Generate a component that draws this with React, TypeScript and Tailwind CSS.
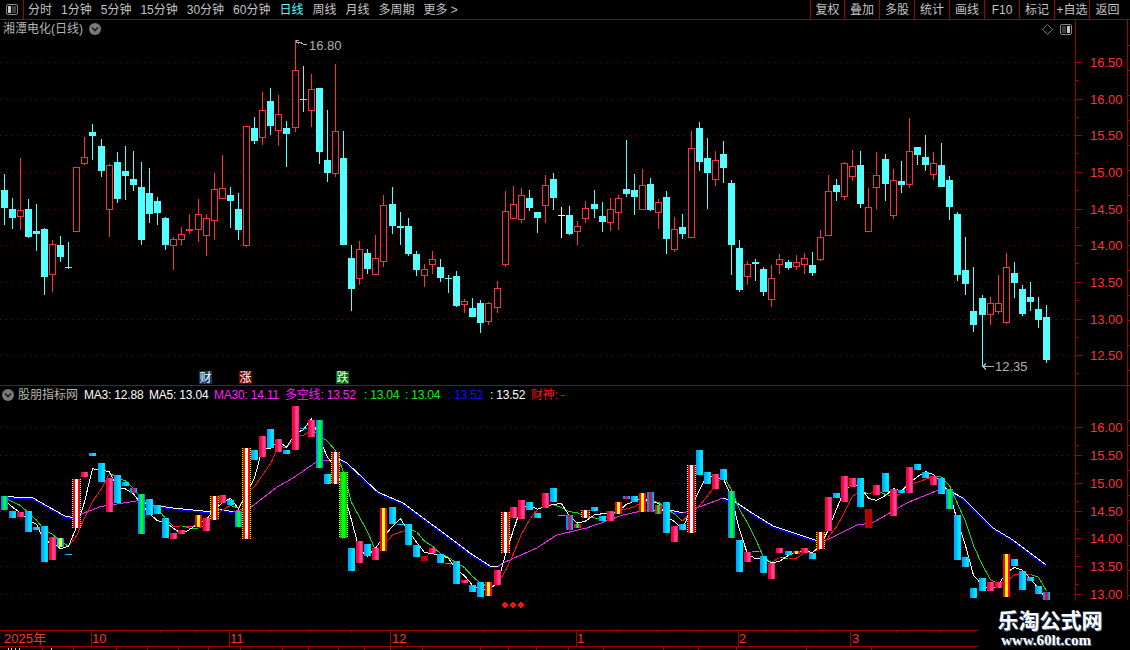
import React from "react";

type C = [number, number, number, number, number];
const D: C[] = [
[0,174,225,190,208],[0,198,229,209,218],[1,158,230,210,217],[0,199,238,209,237],[0,204,251,231,234],[0,228,295,229,277],[1,240,292,244,275],[0,236,262,245,257],[0,242,269,267,268],[1,167,232,167,232],
[1,137,165,157,164],[0,124,160,132,136],[0,139,177,146,171],[1,164,237,165,210],[0,152,203,162,199],[0,146,200,171,176],[0,151,191,179,185],[0,162,245,187,240],[0,168,223,193,214],[0,197,225,201,213],
[0,217,250,218,245],[1,237,270,239,246],[1,227,245,234,240],[1,214,234,229,231],[1,199,242,214,230],[1,214,256,218,236],[1,173,240,189,221],[1,155,199,188,199],[0,187,228,195,201],[0,193,240,209,230],
[1,126,247,126,246],[0,117,144,128,141],[1,92,145,110,138],[0,88,135,101,126],[1,95,146,114,131],[0,121,167,128,134],[1,40,132,70,128],[0,66,112,99,100],[1,74,127,89,111],[0,88,164,88,152],
[0,110,182,160,173],[1,64,177,131,174],[0,131,245,158,245],[0,245,311,258,289],[1,241,285,249,279],[0,249,274,253,269],[1,235,275,258,275],[1,195,267,205,262],[0,187,234,204,226],[0,212,245,226,228],
[0,218,256,226,254],[0,251,276,254,270],[1,264,287,269,276],[1,251,274,259,265],[0,259,282,267,278],[0,275,293,278,279],[0,271,307,276,306],[1,299,313,301,305],[0,298,317,308,317],[0,300,333,303,323],
[1,302,325,303,322],[1,281,313,288,308],[1,191,267,211,265],[1,186,219,204,219],[1,188,223,195,220],[0,190,211,198,208],[0,212,233,212,218],[1,175,223,185,206],[0,173,210,179,198],[2,207,238,215,216],
[0,206,235,215,234],[1,221,245,226,232],[1,201,223,208,219],[0,190,218,204,209],[0,202,232,216,222],[1,198,231,209,223],[1,195,230,198,213],[0,140,197,189,194],[0,174,215,190,197],[1,169,210,185,210],
[0,178,211,184,210],[1,199,229,202,213],[0,191,254,197,239],[1,217,252,229,250],[0,214,239,227,234],[1,131,238,148,238],[0,122,171,128,162],[0,138,209,158,173],[1,151,186,160,180],[0,141,183,154,168],
[0,180,275,183,245],[0,240,292,248,290],[1,261,285,264,277],[0,259,281,262,264],[0,267,296,269,292],[1,265,307,278,300],[1,254,274,259,265],[0,260,270,262,268],[1,255,270,262,267],[1,253,274,258,265],
[0,252,276,265,273],[1,230,261,237,260],[1,175,236,191,236],[0,179,201,185,192],[1,162,200,163,197],[1,150,181,166,177],[0,151,208,165,204],[1,188,232,207,232],[1,152,209,175,188],[0,154,201,159,184],
[1,169,219,180,216],[0,161,193,181,185],[1,118,188,151,185],[0,147,165,147,155],[0,135,171,157,165],[1,152,180,163,175],[0,143,187,165,187],[0,176,220,180,207],[0,212,281,214,275],[0,237,295,270,284],
[0,267,332,311,325],[0,295,367,298,315],[1,297,325,303,315],[1,275,314,303,312],[1,253,324,267,323],[0,262,298,273,283],[0,285,316,289,314],[0,282,311,297,302],[0,297,328,309,320],[0,305,363,317,360],
];
const LT = "g c p c c c p k c w p c c p c c m g c c c p p p y p w p c g w c p c p c p c p g c w G c p c p y c c c c d p c c c p c c y p w p p c c p c c m r w c c p y m c y m r c p c w c c p c g c p c c p p c y p c w p c p p c d p c p c p c c p c g c c c c p p y c c c c m".split(" ");

const CY = ["#00a0ff","#00aeff","#00bcff","#00ccff","#00e0ff","#00e8ff","#00d8ff"];
const PK = ["#ff0030","#ff0030","#ff1060","#ff3080","#ff4898","#ff4090","#ff2070"];
const PAL: Record<string, string[]> = {
  c: CY,
  p: PK,
  g: ["#0090ff","#00a0ff","#00f040","#00ff20","#00ff20","#00c880","#0090ff"],
  G: ["#00c000","#00e000","#00ff20","#00ff20","#00ff20","#00e000","#00c000"],
  k: ["#00c8ff","#00e0ff","#ffff00","#ffff00","#ffff00","#00c0ff","#0090ff"],
  y: ["#ff0020","#ff0020","#ffff00","#ffff00","#ffff00","#ff0020","#ff0020"],
  w: ["#ff0000","#ff0000","#ffffff","#ffffff","#ffffff","#ff0000","#ff0000"],
  m: ["#0090ff","#0090ff","#e01030","#e01030","#c02050","#0090ff","#00c0ff"],
  r: ["#ff0030","#ff0030","#00e030","#00ff20","#00e030","#ff0030","#ff0030"],
  d: ["#c00000","#c00000","#b00000","#b00000","#b00000","#c00000","#c00000"],
};

const cx = (i: number) => 4 + 8 * i + Math.floor((i - (i >= 60 ? 1 : 0)) / 12);
const low = (y: number) => 400.3 + (y - 62.3) * 0.7529;
const CYAN = "#54ffff";
const RED = "#ff3232";
const GRID = "#a00000";
const closes = D.map((d) => low(d[0] === 1 ? d[3] : d[4]));
const ma = (n: number) =>
  closes.map((_, i) => {
    let s = 0;
    for (let k = 0; k < n; k++) s += i - k >= 0 ? closes[i - k] : 494;
    return s / n;
  });
const MA3 = ma(3);
const MA5 = ma(5);
const MA30: [number, number][] = [
[4,496.5],[33,498],[66,516.7],[76,517.5],[84,513],[100,506.7],[116.7,504],[138,500.7],[140,503],[173,508],[213,512],[220,509],[233,512],[251.7,506.7],[276.7,487.3],[293,478],[316.7,461.7],[339.3,459.3],[347,463],[376.7,491],[380,493],[403,503],[436.7,528],[470,553],[490,566],[498,566.3],[503,563],[536.7,548],[556.7,535],[586.7,528],[623,515],[646.7,510],[670,510],[683,513],[696.7,508],[723,498],[735,501.7],[750,511.7],[773,526],[816.7,540.7],[826.7,540],[856.7,525],[873,522.7],[906.7,503],[936.7,490.7],[946.7,489.3],[963,498],[993,528],[1013,540],[1046,565],
];
const mainGrid = [62, 99, 135, 172, 209, 245, 282, 319, 355];
const mainLab = ["16.50","16.00","15.50","15.00","14.50","14.00","13.50","13.00","12.50"];
const lowGrid = [427, 455, 483, 511, 538, 566, 594];
const lowLab = ["16.00","15.50","15.00","14.50","14.00","13.50","13.00"];

function Axis({ grid, labels, end }: { grid: number[]; labels: string[]; end: number }) {
  return (
    <g>
      {grid.map((y, i) => (
        <g key={y}>
          <line x1={0} x2={1075} y1={y + 0.5} y2={y + 0.5} stroke="#8c0000" strokeDasharray="1 5" />
          <rect x={1076} y={y} width={6} height={1} fill={GRID} />
          <rect x={1076} y={y + 18} width={3} height={1} fill={GRID} />
          <text x={1090} y={y + 5} fontSize={13} fill={RED}>{labels[i]}</text>
        </g>
      ))}
      <rect x={1127} y={20} width={1} height={end - 20} fill={GRID} />
      {Array.from({ length: 24 }, (_, k) => 45 + k * 25).filter((y) => y < end).map((y) => (
        <rect key={y} x={1127} y={y} width={3} height={1} fill={GRID} />
      ))}
    </g>
  );
}

function Candles() {
  return (
    <g>
      {D.map(([t, wt, wb, bt, bb], i) => {
        const c = cx(i);
        const color = t === 0 ? CYAN : t === 1 ? RED : "#ffffff";
        const h = bb - bt;
        return (
          <g key={i}>
            <rect x={c} y={wt} width={1} height={wb - wt} fill={color} />
            {t === 1 && h > 3 ? (
              <rect x={c - 2.5} y={bt + 0.5} width={6} height={h - 1} fill="#000" stroke={color} />
            ) : (
              <rect x={c - 3} y={bt} width={7} height={Math.max(h, 1)} fill={color} />
            )}
          </g>
        );
      })}
    </g>
  );
}

function Segs() {
  return (
    <g fill="none">
      {MA30.slice(1).map((p, i) => {
        const q = MA30[i];
        const up = p[1] < q[1];
        return up ? (
          <line key={i} x1={q[0]} y1={q[1]} x2={p[0]} y2={p[1]} stroke="#ff20ff" />
        ) : (
          <g key={i}>
            <line x1={q[0]} y1={q[1] + 1} x2={p[0]} y2={p[1] + 1} stroke="#0000ff" strokeWidth={2} />
            <line x1={q[0]} y1={q[1]} x2={p[0]} y2={p[1]} stroke="#ffffff" />
          </g>
        );
      })}
      {MA5.slice(1).map((y, i) => (
        <line key={i} x1={cx(i) + 0.5} y1={MA5[i]} x2={cx(i + 1) + 0.5} y2={y} stroke={y < MA5[i] ? "#ff1010" : "#10e010"} />
      ))}
      <polyline points={MA3.map((y, i) => `${cx(i) + 0.5},${y}`).join(" ")} stroke="#ffffff" />
    </g>
  );
}

function Bars() {
  return (
    <g>
      {D.map((d, i) => {
        const c = cx(i);
        const t = LT[i];
        const top = Math.round(low(d[3]));
        const bot = Math.min(600, Math.round(low(d[4])));
        const h = Math.max(bot - top, 1);
        const pal = PAL[t];
        return (
          <g key={i}>
            {pal.map((col, k) => (
              <rect key={k} x={c - 3 + k} y={top} width={1} height={h} fill={col} />
            ))}
            {(t === "w" || t === "G") && (
              <g>
                <line x1={c - 3.5} x2={c - 3.5} y1={top} y2={bot} stroke="#ffff00" strokeDasharray="1 1" />
                <line x1={c + 4.5} x2={c + 4.5} y1={top} y2={bot} stroke="#ffff00" strokeDasharray="1 1" />
              </g>
            )}
          </g>
        );
      })}
    </g>
  );
}

const tabs = ["分时", "1分钟", "5分钟", "15分钟", "30分钟", "60分钟", "日线", "周线", "月线", "多周期", "更多 >"];
const btns = ["复权", "叠加", "多股", "统计", "画线", "F10", "标记", "+自选"];
const legend: [string, string, number][] = [
  ["MA3: 12.88", "text-white", 65],
  ["MA5: 13.04", "text-white", 65],
  ["MA30: 14.11", "text-[#ff20ff]", 71],
  ["多空线: 13.52", "text-[#ff20ff]", 79],
  [": 13.04", "text-[#10f010]", 41],
  [": 13.04", "text-[#10f010]", 43],
  [": 13.52", "text-[#1010ff]", 42],
  [": 13.52", "text-white", 41],
  ["财神: -", "text-[#ff1010]", 40],
];
const majorTicks = [91, 229, 390, 576, 738, 850];
const minorTicks = [160, 195, 270, 310, 351, 437, 484, 530, 617, 657, 698, 766, 796, 822, 896, 940];
const lowerTicks = [42, 73, 116, 147, 178, 208, 240, 282, 308, 338, 364, 390, 422, 480, 508, 536, 568, 603, 663, 698, 736, 806, 871];
const months: [string, number][] = [["10", 92], ["11", 230], ["12", 392], ["1", 577], ["2", 739], ["3", 852]];

function Chevron({ size }: { size: number }) {
  return (
    <svg width={size} height={size} viewBox="0 0 12 12" className="shrink-0">
      <circle cx={6} cy={6} r={6} fill="#7a7a7a" />
      <path d="M3 4.5 L6 7.5 L9 4.5" fill="none" stroke="#1a1a1a" strokeWidth={1.6} />
    </svg>
  );
}

export default function App() {
  return (
    <div className="relative w-[1130px] h-[650px] overflow-hidden bg-black text-[12px] leading-none font-['Liberation_Sans','Noto_Sans_CJK_SC',sans-serif]">
      <div className="flex h-5 items-stretch border-b border-[#a00000] text-[#c4c4c4]">
        <div className="flex w-6 items-center justify-center border-r border-[#a00000]">
          <svg width={12} height={11} viewBox="0 0 12 11">
            <rect x={0.5} y={0.5} width={11} height={10} rx={1.5} fill="none" stroke="#8a8a8a" />
            <rect x={2} y={2} width={3} height={7} fill="#c8c8c8" />
            <rect x={6} y={2} width={4} height={7} fill="#3c3c3c" />
          </svg>
        </div>
        <div className="flex items-center gap-[9px] pl-1">
          {tabs.map((t) => (
            <span key={t} className={t === "日线" ? "text-[#54ffff]" : ""}>{t}</span>
          ))}
        </div>
        <div className="ml-auto flex">
          {btns.map((b, i) => (
            <span key={b} className={`flex items-center justify-center border-l border-[#a00000] ${i === 0 ? "w-[34px]" : "w-[35px]"}`}>{b}</span>
          ))}
          <span className="flex w-[41px] items-center justify-center border-l border-[#a00000] pr-[5px]">返回</span>
        </div>
      </div>

      <div className="relative h-[365px]">
        <div className="absolute left-[3px] top-[3px] flex items-center gap-[6px] text-[#b4b4b4]">
          <span>湘潭电化(日线)</span>
          <Chevron size={12} />
        </div>
        <div className="absolute left-[1042px] top-[4px] flex items-center gap-[7px]">
          <svg width={11} height={11} viewBox="0 0 11 11">
            <path d="M5.5 0.5 L10.5 5.5 L5.5 10.5 L0.5 5.5 Z" fill="none" stroke="#7a7a7a" />
          </svg>
          <svg width={12} height={11} viewBox="0 0 12 11">
            <rect x={0.5} y={0.5} width={11} height={10} rx={1.5} fill="none" stroke="#8a8a8a" />
            <rect x={2} y={2} width={4} height={7} fill="#3c3c3c" />
            <rect x={7} y={2} width={3} height={7} fill="#c8c8c8" />
          </svg>
        </div>
        <svg width={1130} height={365} viewBox="0 20 1130 365" shapeRendering="crispEdges" className="block">
          <Axis grid={mainGrid} labels={mainLab} end={385} />
          <rect x={1075} y={20} width={1} height={365} fill={GRID} />
          <Candles />
          <g fill="none" stroke="#b0b0b0">
            <path d="M296 41 L299 40 M296 41 L299 44 M296 42 L300 42 L303 44 L307 45" />
            <path d="M983 366.5 L994 366.5 M983 366.5 L986 363.5 M983 366.5 L986 369.5" />
          </g>
          <text x={309} y={50} fontSize={13} fill="#b0b0b0">16.80</text>
          <text x={995} y={371} fontSize={13} fill="#b0b0b0">12.35</text>
          <rect x={199} y={371} width={13} height={13} fill="#0f3c70" />
          <rect x={239} y={371} width={13} height={13} fill="#7a0000" />
          <rect x={336} y={371} width={13} height={13} fill="#006a00" />
          <text x={199.5} y={382} fontSize={12} fill="#fff">财</text>
          <text x={239.5} y={382} fontSize={12} fill="#fff">涨</text>
          <text x={336.5} y={382} fontSize={12} fill="#fff">跌</text>
        </svg>
      </div>

      <div className="flex h-[19px] border-t border-[#a00000] tracking-[-0.2px]">
        <div className="flex w-[1076px] items-center border-r border-[#a00000] pl-[2px]">
          <Chevron size={12} />
          <span className="ml-[4px] w-[66px] tracking-normal text-[#b4b4b4]">股朋指标网</span>
          {legend.map(([t, c, w], i) => (
            <span key={i} className={`whitespace-nowrap ${c}`} style={{ width: w }}>{t}</span>
          ))}
        </div>
        <div className="w-[52px] border-r border-[#a00000]" />
      </div>

      <svg width={1130} height={226} viewBox="0 404 1130 226" shapeRendering="crispEdges" className="block">
        <Axis grid={lowGrid} labels={lowLab} end={600} />
        <rect x={1075} y={404} width={1} height={196} fill={GRID} />
        <Segs />
        <Bars />
        {[505, 513, 521].map((x) => (
          <circle key={x} cx={x} cy={605} r={2.8} fill="#ff1010" />
        ))}
      </svg>

      <svg width={1130} height={20} viewBox="0 630 1130 20" shapeRendering="crispEdges" className="block">
        <rect x={0} y={630} width={1130} height={1} fill={GRID} />
        <rect x={0} y={646} width={1130} height={1} fill={GRID} />
        {majorTicks.map((x) => <rect key={x} x={x} y={630} width={1} height={16} fill={GRID} />)}
        {minorTicks.map((x) => <rect key={x} x={x} y={630} width={1} height={3} fill={GRID} />)}
        {lowerTicks.map((x) => <rect key={x} x={x} y={646} width={1} height={4} fill={GRID} />)}
        <text x={4} y={643} fontSize={13} fill={RED}>2025年</text>
        {months.map(([m, x]) => <text key={x} x={x} y={643} fontSize={13} fill={RED}>{m}</text>)}
        {[8, 11, 15, 19, 51].map((x) => <rect key={x} x={x} y={648} width={1} height={2} fill="#c8c8c8" />)}
      </svg>

      <div className="absolute bottom-0 right-0 flex h-[50px] w-[152px] flex-col items-center bg-black pr-[8px] pt-[8px]">
        <span className="text-[21px] leading-[23px] font-bold text-white [text-shadow:1px_1px_0_#4a6a9a] font-['Noto_Sans_CJK_SC',sans-serif]">乐淘公式网</span>
        <span className="mt-[1px] mr-[8px] text-[15px] leading-[17px] font-bold text-white [text-shadow:1px_1px_0_#4a6a9a] font-['Liberation_Serif',serif]">www.60lt.com</span>
      </div>
    </div>
  );
}
